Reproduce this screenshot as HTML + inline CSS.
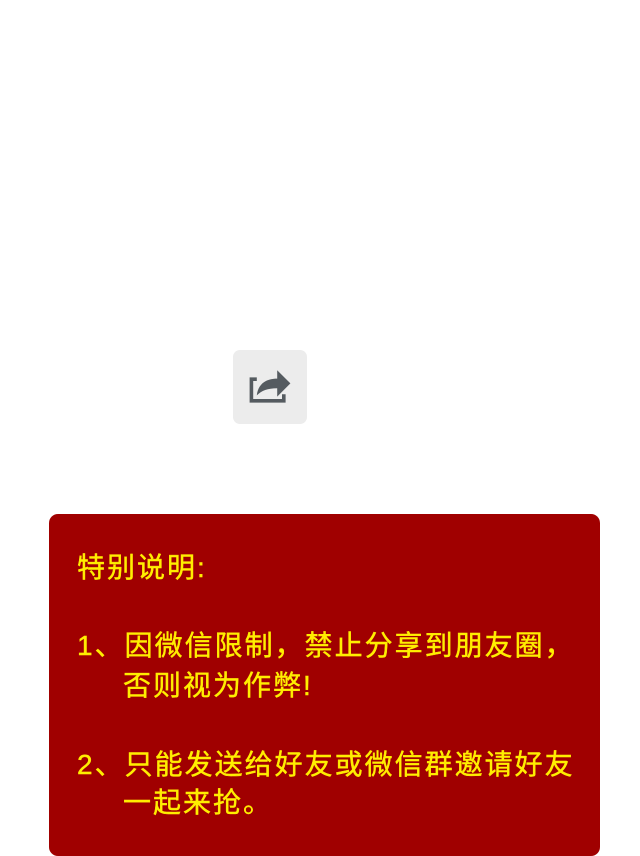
<!DOCTYPE html>
<html><head><meta charset="utf-8"><style>
body{margin:0;width:640px;height:856px;background:#fff;position:relative;overflow:hidden;font-family:"Liberation Sans","Noto Sans CJK SC",sans-serif}
.btn{position:absolute;left:233px;top:350px;width:74px;height:74px;background:#ececec;border-radius:7px}
.box{position:absolute;left:49px;top:514px;width:551px;height:342px;background:#a00000;border-radius:9px}
.t{position:absolute;color:#ffee00;font-size:28px;letter-spacing:2px;white-space:nowrap;line-height:40px;-webkit-text-stroke:0.4px #ffee00}
</style></head><body>
<div class="btn"><svg width="74" height="74" viewBox="0 0 74 74">
<g transform="translate(37 37) scale(1.2) translate(-36 -37)">
<path d="M19 29h6v3h-3v15h24v-4h3v7H19z" fill="#555b60"/>
<path d="M25 44c1-9 7-14 17-14v-7l11 11-11 11v-7c-8 0-13 2-17 6z" fill="#555b60"/>
</g>
</svg></div>
<div class="box"></div>
<div class="t" style="left:77px;top:548px">特别说明:</div>
<div class="t" style="left:77px;top:626px">1、因微信限制，禁止分享到朋友圈，</div>
<div class="t" style="left:123px;top:666px">否则视为作弊!</div>
<div class="t" style="left:77px;top:745px">2、只能发送给好友或微信群邀请好友</div>
<div class="t" style="left:123px;top:783px">一起来抢。</div>
</body></html>
